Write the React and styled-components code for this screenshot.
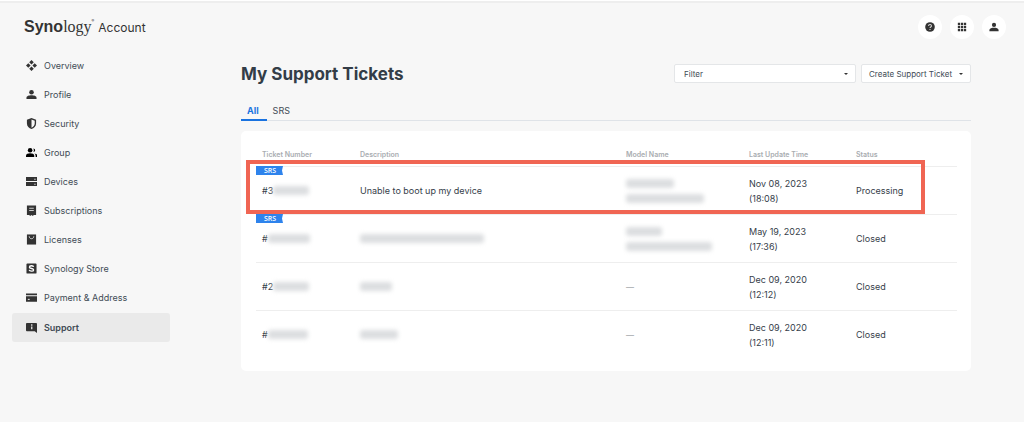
import React from "react";
import styled, { createGlobalStyle, css } from "styled-components";

const GlobalStyle = createGlobalStyle`
    * {
        box-sizing: border-box;
    }
    body {
        margin: 0;
        background: #f7f7f7;
        color: #414b55;
        font-family: Inter, "Liberation Sans", sans-serif;
        font-size: 9px;
    }
`;

const Page = styled.div`
    min-height: 100vh;
    border-top: 1px solid #fff;
`;
const Header = styled.header`
    display: flex;
    align-items: center;
    justify-content: space-between;
    height: 50px;
    padding: 0 18px 0 24px;
    border-top: 2px solid #eee;
`;
const Brand = styled.a`
    display: flex;
    align-items: baseline;
    color: #333;
    text-decoration: none;
`;
const BrandSans = styled.span`
    font: bold 16px "Liberation Sans", sans-serif;
`;
const BrandSerif = styled.span`
    font: 16px "Liberation Serif", serif;
`;
const BrandMark = styled.sup`
    align-self: flex-start;
    font-size: 4px;
`;
const BrandName = styled.span`
    margin-left: 4px;
    font-size: 12px;
`;
const HeaderActions = styled.div`
    display: flex;
    gap: 8px;
`;
const RoundButton = styled.button`
    display: flex;
    align-items: center;
    justify-content: center;
    width: 24px;
    height: 24px;
    padding: 0;
    border: 0;
    border-radius: 50%;
    background: #fff;
    color: #333;
`;

const Body = styled.div`
    display: flex;
    padding: 0 53px 50px 12px;
`;
const Sidebar = styled.nav`
    flex: none;
    width: 158px;
    margin-right: 71px;
`;
const SidebarLink = styled.a`
    display: flex;
    align-items: center;
    gap: 7px;
    height: 29px;
    padding-left: 14px;
    border-radius: 3px;
    color: #414b55;
    text-decoration: none;

    &:last-child {
        margin-top: 1px;
    }
    ${(props) =>
        props.$active &&
        css`
            background: #eaeaea;
            font-weight: 600;
        `}
`;
const Icon = styled.svg`
    display: block;
    flex: none;
    width: ${(props) => props.$size || 11}px;
    height: ${(props) => props.$size || 11}px;
    fill: ${(props) => props.$color || "#333"};
`;

const Main = styled.main`
    flex: 1;
    min-width: 0;
    padding-top: 13px;
`;
const TitleBar = styled.div`
    display: flex;
    align-items: center;
    gap: 5px;
    height: 19px;
`;
const Title = styled.h1`
    margin: 0 auto 0 0;
    color: #333d47;
    font-size: 17px;
    font-weight: 700;
`;
const DropButton = styled.button`
    display: flex;
    align-items: center;
    justify-content: space-between;
    gap: 7px;
    width: ${(props) => props.$width}px;
    height: 19px;
    padding: 0 7px 0 ${(props) => props.$inset}px;
    border: 1px solid #e4e6e8;
    border-radius: 2px;
    background: #fff;
    color: #414b55;
    font-family: inherit;
    font-size: 8px;
    white-space: nowrap;
`;
const Caret = styled.span`
    border: 2px solid transparent;
    border-top-color: #333;
    border-bottom: 0;
`;

const Tabs = styled.div`
    display: flex;
    height: 20px;
    margin-top: 18px;
    border-bottom: 1px solid #dfe3e8;
`;
const Tab = styled.button`
    height: 20px;
    padding: 0 8px 0 6px;
    border: 0;
    border-bottom: 2px solid ${(props) => (props.$active ? "#1a73e0" : "transparent")};
    background: none;
    color: ${(props) => (props.$active ? "#1a73e0" : "#414b55")};
    font-family: inherit;
    font-size: 9px;
    font-weight: ${(props) => (props.$active ? 700 : 400)};
`;

const Card = styled.section`
    margin-top: 10px;
    padding: 11px 14px 13px 15px;
    border-radius: 5px;
    background: #fff;
`;
const Table = styled.table`
    width: 100%;
    border-collapse: separate;
    border-spacing: 0;
    table-layout: fixed;
`;
const Th = styled.th`
    width: ${(props) => (props.$width ? `${props.$width}px` : "auto")};
    height: 24px;
    padding: 0 0 0 6px;
    color: #a9adb1;
    font-size: 7px;
    font-weight: 600;
    text-align: left;
`;
const Row = styled.tr`
    position: relative;
`;
const Td = styled.td`
    height: 48px;
    padding: 0 0 0 6px;
    border-top: 1px solid #eee;
    color: #36404a;
    line-height: 15px;
    vertical-align: middle;
`;
const Badge = styled.span`
    position: absolute;
    top: 0;
    left: 0;
    width: 27px;
    height: 9px;
    padding-left: 8px;
    background: #2e83ec;
    clip-path: polygon(0 0, 100% 0, 26px 50%, 100% 100%, 0 100%);
    color: #fff;
    font: 600 7px/9px "Open Sans", sans-serif;
`;
const Highlight = styled.span`
    position: absolute;
    top: -6px;
    right: 32px;
    bottom: 0;
    left: -10px;
    border: 4px solid #f06553;
    pointer-events: none;
`;
const Masked = styled.span`
    display: flex;
    align-items: center;
`;
const Smudge = styled.span`
    display: block;
    width: ${(props) => props.$width}px;
    height: 9px;
    margin: 6px 0;
    border-radius: 3px;
    background: #dcdee0;
    filter: blur(2px);
`;
const Empty = styled.span`
    color: #b5b8bb;
    font-size: 8px;
    font-weight: 700;
`;

const icons = {
    overview: <path d="M12 0l5 5-5 5-5-5zM12 14l5 5-5 5-5-5zM0 12l5-5 5 5-5 5zM14 12l5-5 5 5-5 5z" />,
    profile: (
        <>
            <circle cx="12" cy="7" r="5" />
            <path d="M1 22v-3c0-4 6-5.500 11-5.500S23 15 23 19v3z" />
        </>
    ),
    security: <path fillRule="evenodd" d="M12 0l10 4v8c0 6-4.500 10.500-10 12C6.500 22.500 2 18 2 12V4zM12 3v18c4-1.500 7-5 7-9V6z" />,
    group: (
        <>
            <circle cx="9" cy="7" r="5" />
            <path d="M0 22v-3c0-4 4.500-5.500 9-5.500s9 1.500 9 5.500v3z" />
            <path d="M16 3a4 4 0 1 1 0 8c1.500-2.500 1.500-5.500 0-8zM18.500 14c4 .8 6.500 2.500 6.500 5v3h-4v-3c0-2-.8-3.700-2.500-5z" />
        </>
    ),
    devices: (
        <>
            <path d="M0 2h24v9H0zM0 13h24v9H0z" />
            <path d="M18 6h3v2h-3zM18 17h3v2h-3z" fill="#ddd" />
        </>
    ),
    subscriptions: (
        <>
            <path d="M2 1h20v21h-5l-2 2-3-2-3 2-2-2H2z" />
            <path d="M7 6h10v2H7zM7 11h10v2H7z" fill="#ccc" />
        </>
    ),
    licenses: (
        <>
            <path d="M2 1h20v22H2z" />
            <path d="M7 5c0 7 10 7 10 0" fill="none" stroke="#ddd" strokeWidth="2" />
        </>
    ),
    store: (
        <>
            <rect x="1" y="1" width="22" height="22" rx="2" />
            <path d="M16.500 8.500C16 5 7.500 5.500 7.500 9c0 4 9 2 9 6 0 3.500-8.500 4-9.500 0" fill="none" stroke="#fff" strokeWidth="3" />
        </>
    ),
    payment: (
        <>
            <path d="M0 3h24v4H0zM0 9h24v12H0z" />
            <path d="M4 15h4v2H4z" fill="#fff" />
        </>
    ),
    support: (
        <>
            <path d="M2 2h20q2 0 2 2v20l-5-4H2q-2 0-2-2V4q0-2 2-2z" />
            <path d="M11 5h3v3h-3zM11 10h3v6h-3z" fill="#ddd" />
        </>
    ),
    apps: <path d="M2 2h5.500v5.500H2zM9.300 2h5.500v5.500H9.300zM16.500 2H22v5.500h-5.500zM2 9.300h5.500v5.500H2zM9.300 9.300h5.500v5.500H9.300zM16.500 9.300H22v5.500h-5.500zM2 16.500h5.500V22H2zM9.300 16.500h5.500V22H9.300zM16.500 16.500H22V22h-5.500z" />,
    help: (
        <>
            <circle cx="12" cy="12" r="11.500" />
            <path d="M8.500 9.500c0-4.500 7-4.500 7 0 0 2.500-3.500 2.500-3.500 5M12 16.500v2.500" fill="none" stroke="#ddd" strokeWidth="2.500" />
        </>
    ),
};

const Glyph = ({ name, size, color }) => (
    <Icon viewBox="0 0 24 24" $size={size} $color={color} aria-hidden="true">
        {icons[name]}
    </Icon>
);

const links = [
    { icon: "overview", label: "Overview" },
    { icon: "profile", label: "Profile" },
    { icon: "security", label: "Security" },
    { icon: "group", label: "Group", color: "#000" },
    { icon: "devices", label: "Devices" },
    { icon: "subscriptions", label: "Subscriptions" },
    { icon: "licenses", label: "Licenses" },
    { icon: "store", label: "Synology Store" },
    { icon: "payment", label: "Payment & Address" },
    { icon: "support", label: "Support", active: true },
];

const tickets = [
    { number: "#3", mask: 36, srs: true, marked: true, text: "Unable to boot up my device", model: [48, 78], date: "Nov 08, 2023", time: "(18:08)", status: "Processing" },
    { number: "#", mask: 42, srs: true, textMask: 124, model: [36, 86], date: "May 19, 2023", time: "(17:36)", status: "Closed" },
    { number: "#2", mask: 36, textMask: 32, date: "Dec 09, 2020", time: "(12:12)", status: "Closed" },
    { number: "#", mask: 40, textMask: 38, date: "Dec 09, 2020", time: "(12:11)", status: "Closed" },
];

const Ticket = ({ ticket }) => (
    <Row>
        <Td>
            {ticket.srs && <Badge>SRS</Badge>}
            <Masked>
                {ticket.number}
                <Smudge $width={ticket.mask} />
            </Masked>
            {ticket.marked && <Highlight />}
        </Td>
        <Td>{ticket.text || <Smudge $width={ticket.textMask} />}</Td>
        <Td>{ticket.model ? ticket.model.map((width) => <Smudge key={width} $width={width} />) : <Empty>—</Empty>}</Td>
        <Td>
            {ticket.date}
            <br />
            {ticket.time}
        </Td>
        <Td>{ticket.status}</Td>
    </Row>
);

const App = () => {
    return (
        <Page>
            <GlobalStyle />
            <Header>
                <Brand href="#">
                    <BrandSans>Syno</BrandSans>
                    <BrandSerif>logy</BrandSerif>
                    <BrandMark>®</BrandMark>
                    <BrandName>Account</BrandName>
                </Brand>
                <HeaderActions>
                    <RoundButton aria-label="Help">
                        <Glyph name="help" size={10} />
                    </RoundButton>
                    <RoundButton aria-label="Apps">
                        <Glyph name="apps" size={10} />
                    </RoundButton>
                    <RoundButton aria-label="Profile">
                        <Glyph name="profile" size={10} />
                    </RoundButton>
                </HeaderActions>
            </Header>
            <Body>
                <Sidebar>
                    {links.map((link) => (
                        <SidebarLink key={link.label} href="#" $active={link.active}>
                            <Glyph name={link.icon} color={link.color} />
                            {link.label}
                        </SidebarLink>
                    ))}
                </Sidebar>
                <Main>
                    <TitleBar>
                        <Title>My Support Tickets</Title>
                        <DropButton $width={182} $inset={9}>
                            Filter
                            <Caret />
                        </DropButton>
                        <DropButton $width={110} $inset={7}>
                            Create Support Ticket
                            <Caret />
                        </DropButton>
                    </TitleBar>
                    <Tabs>
                        <Tab $active>All</Tab>
                        <Tab>SRS</Tab>
                    </Tabs>
                    <Card>
                        <Table>
                            <thead>
                                <tr>
                                    <Th $width={98}>Ticket Number</Th>
                                    <Th>Description</Th>
                                    <Th $width={123}>Model Name</Th>
                                    <Th $width={107}>Last Update Time</Th>
                                    <Th $width={107}>Status</Th>
                                </tr>
                            </thead>
                            <tbody>
                                {tickets.map((ticket) => (
                                    <Ticket key={ticket.date + ticket.time} ticket={ticket} />
                                ))}
                            </tbody>
                        </Table>
                    </Card>
                </Main>
            </Body>
        </Page>
    );
};

export default App;
